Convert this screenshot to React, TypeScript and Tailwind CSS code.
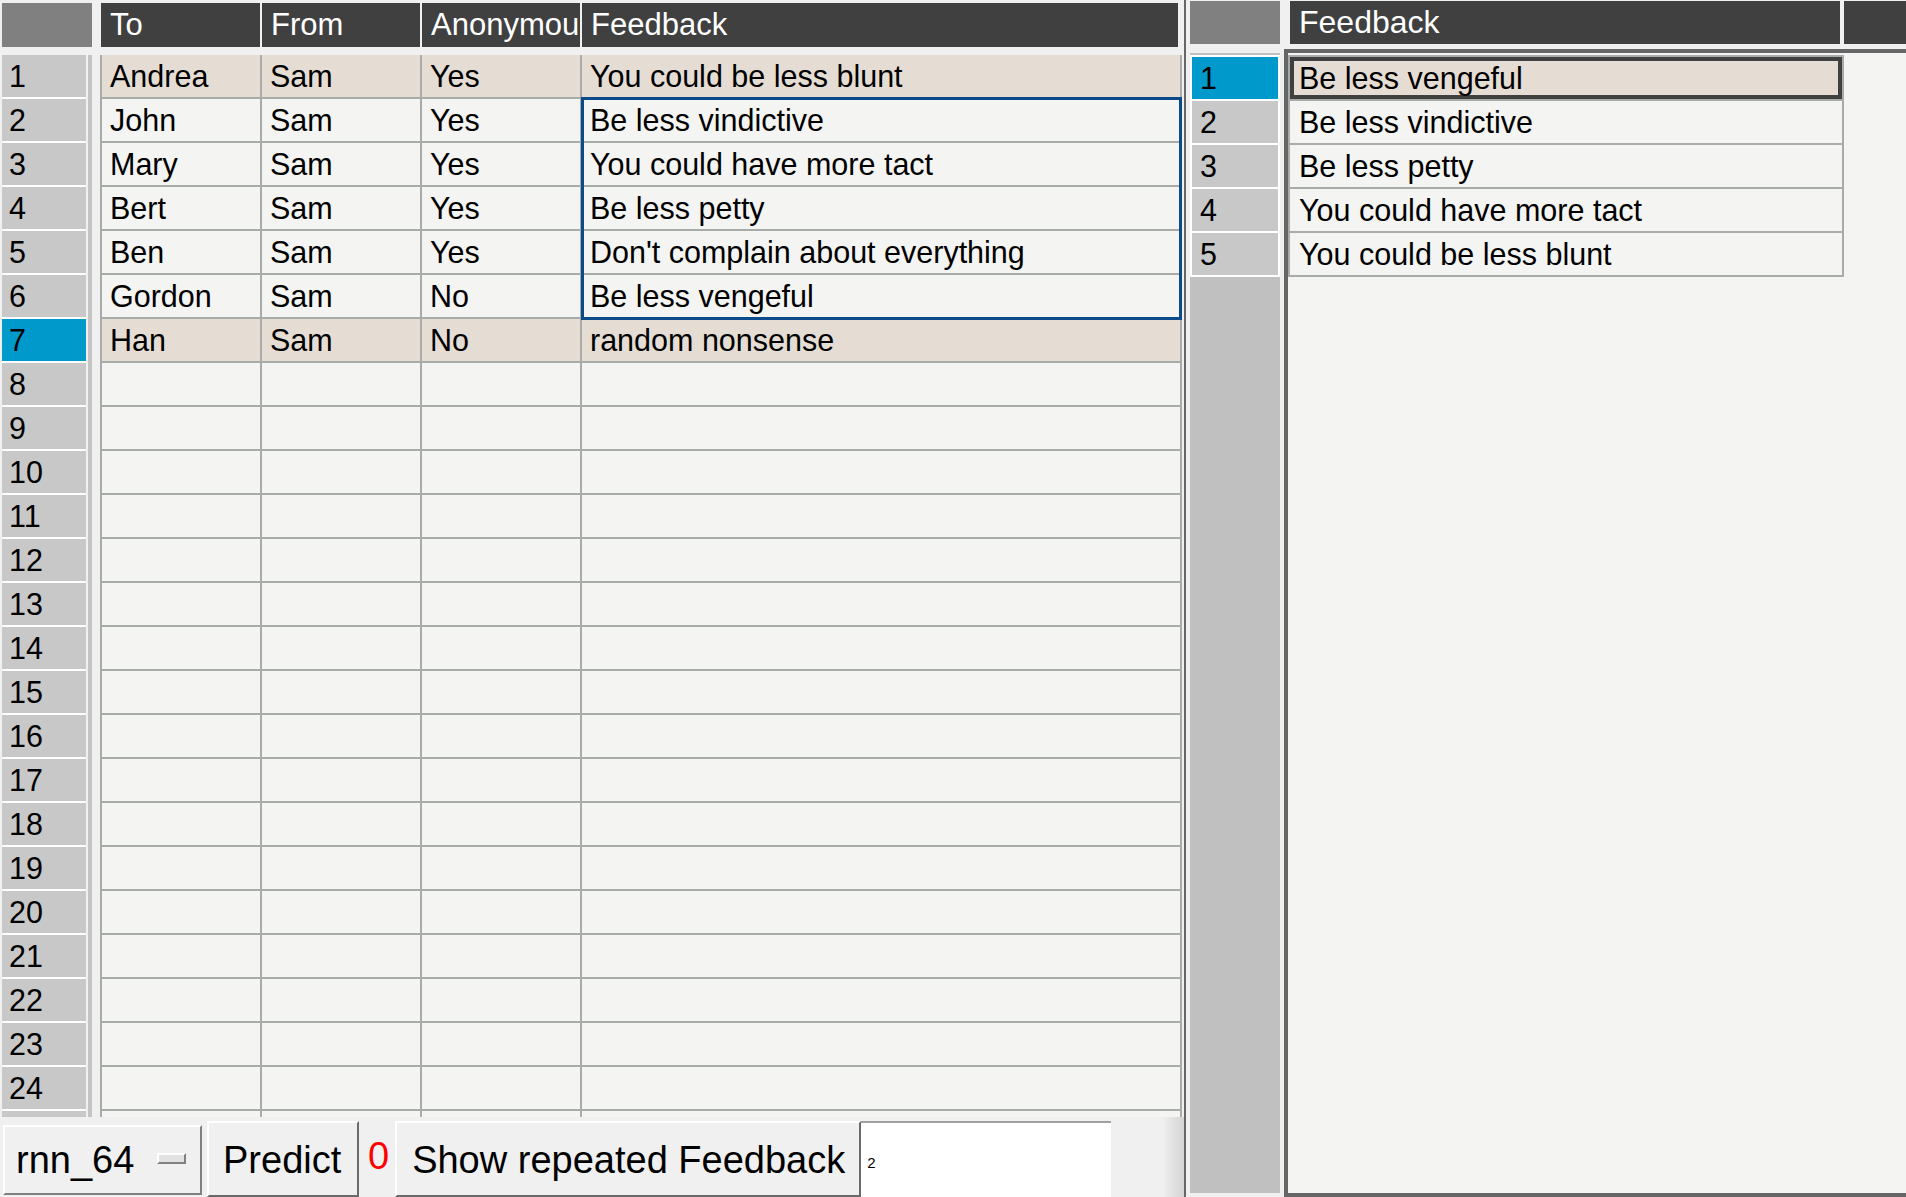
import React from 'react'

const rows = [
  { to: 'Andrea', from: 'Sam', anon: 'Yes', fb: 'You could be less blunt', hl: true },
  { to: 'John', from: 'Sam', anon: 'Yes', fb: 'Be less vindictive', hl: false },
  { to: 'Mary', from: 'Sam', anon: 'Yes', fb: 'You could have more tact', hl: false },
  { to: 'Bert', from: 'Sam', anon: 'Yes', fb: 'Be less petty', hl: false },
  { to: 'Ben', from: 'Sam', anon: 'Yes', fb: "Don't complain about everything", hl: false },
  { to: 'Gordon', from: 'Sam', anon: 'No', fb: 'Be less vengeful', hl: false },
  { to: 'Han', from: 'Sam', anon: 'No', fb: 'random nonsense', hl: true },
]

// 24 full rows plus the top of the 25th, cut off by the toolbar
const allRows = Array.from({ length: 25 }, (_, i) => rows[i] ?? { to: '', from: '', anon: '', fb: '', hl: false })

const headers = [
  { label: 'To', w: 'w-[159px]' },
  { label: 'From', w: 'w-[158px]' },
  { label: 'Anonymou', w: 'w-[158px]' },
  { label: 'Feedback', w: 'w-[596px]' },
]

const repeated = ['Be less vengeful', 'Be less vindictive', 'Be less petty', 'You could have more tact', 'You could be less blunt']

const cell = 'h-[44px] overflow-hidden whitespace-nowrap border-r-2 border-b-2 border-[#a8aca8] pl-[8px] leading-[42px]'

const App = () => {
  return (
    <div className="flex h-[1197px] w-[1906px] overflow-hidden bg-[#f0f0f0] font-['Liberation_Sans',Arial,sans-serif] text-black">
      {/* left: main grid + toolbar */}
      <div className="flex w-[1184px] flex-col">
        <div className="h-[1117px] overflow-hidden">
          <div className="flex pl-[2px] pt-[3px]">
            <div className="h-[44px] w-[90px] bg-[#808080]" />
            <div className="ml-[9px] flex gap-[2px]">
              {headers.map((h) => (
                <div key={h.label} className={`h-[44px] ${h.w} overflow-hidden whitespace-nowrap bg-[#404040] pl-[9px] text-[31px] leading-[44px] text-white`}>
                  {h.label}
                </div>
              ))}
            </div>
          </div>

          <div className="mt-[8px] flex text-[30.5px]">
            <div className="ml-[2px] w-[84px]">
              {allRows.map((_, i) => (
                <div key={i} className={`h-[44px] border-b-2 border-white pl-[7px] leading-[42px] ${i === 6 ? 'bg-[#0099cc]' : 'bg-[#c8c8c8]'}`}>
                  {i < 24 ? i + 1 : ''}
                </div>
              ))}
            </div>
            <div className="ml-[2px] w-[4px] bg-[#c4c4c4]" />
            <div className="relative ml-[8px] w-[1082px] border-l-2 border-[#a8aca8]">
              {allRows.map((r, i) => (
                <div key={i} className={`flex ${r.hl ? 'bg-[#e5ddd3]' : 'bg-[#f4f4f2]'}`}>
                  <div className={`w-[160px] ${cell}`}>{r.to}</div>
                  <div className={`w-[160px] ${cell}`}>{r.from}</div>
                  <div className={`w-[160px] ${cell}`}>{r.anon}</div>
                  <div className={`w-[600px] ${cell}`}>{r.fb}</div>
                </div>
              ))}
              <div className="absolute left-[479px] top-[42px] h-[223px] w-[601px] border-[3px] border-[#0b4a8b]" />
            </div>
          </div>
        </div>

        {/* toolbar */}
        <div className="flex h-[80px] items-start overflow-hidden text-[38px]">
          <div className="ml-[3px] mt-[8px] flex h-[70px] w-[199px] border-2 border-t-white border-l-white border-r-[#808080] border-b-[#808080]">
            <span className="pl-[11px] leading-[66px]">rnn_64</span>
            <div className="ml-auto mr-[14px] mt-[26px] h-[11px] w-[29px] border-2 border-t-white border-l-white border-r-[#808080] border-b-[#808080] bg-[#e2e2e2]" />
          </div>
          <div className="ml-[5px] mt-[4px] h-[76px] w-[152px] border-2 border-t-white border-l-white border-r-[#6a6a6a] border-b-[#6a6a6a] pl-[14px] leading-[74px]">
            Predict
          </div>
          <div className="ml-[9px] leading-[78px] text-[#ff0000]">0</div>
          <div className="ml-[6px] mt-[4px] h-[76px] w-[466px] whitespace-nowrap border-2 border-t-white border-l-white border-r-[#6a6a6a] border-b-[#6a6a6a] pl-[15px] leading-[74px]">
            Show repeated Feedback
          </div>
          <div className="mt-[4px] h-[76px] w-[250px] border-t-2 border-[#a0a0a0] bg-white pl-[6px] pt-[32px] text-[15px] leading-none">
            2
          </div>
          <div className="flex-1" />
          <div className="h-[80px] w-[22px] bg-linear-to-r from-[#f0f0f0] to-[#d4d4d4]" />
        </div>
      </div>

      {/* divider */}
      <div className="w-[2px] bg-[#666666]" />

      {/* right: repeated feedback */}
      <div className="flex flex-1 flex-col pl-[4px]">
        <div className="flex pt-[1px]">
          <div className="h-[43px] w-[90px] bg-[#808080]" />
          <div className="ml-[10px] h-[43px] w-[550px] bg-[#404040] pl-[9px] text-[32px] leading-[42px] text-white">Feedback</div>
          <div className="ml-[4px] h-[43px] flex-1 bg-[#404040]" />
        </div>
        <div className="flex flex-1 text-[30.5px]">
          <div className="mt-[9px] h-[1140px] w-[90px] bg-[#c0c0c0] pt-[2px]">
            {repeated.map((_, i) => (
              <div key={i} className={`h-[44px] border-x-2 border-b-2 border-white pl-[8px] leading-[42px] ${i === 0 ? 'h-[46px] border-t-2 bg-[#0099cc]' : 'bg-[#c8c8c8]'}`}>
                {i + 1}
              </div>
            ))}
          </div>
          <div className="ml-[4px] mt-[5px] h-[1148px] flex-1 border-y-4 border-l-4 border-[#666666] bg-[#f4f4f2]">
            <div className="mt-[2px] w-[556px] border-x-2 border-t-2 border-[#a8aca8]">
              {repeated.map((t, i) => (
                <div
                  key={t}
                  className={`h-[44px] whitespace-nowrap border-b-2 border-[#a8aca8] pl-[9px] leading-[42px] ${i === 0 ? 'bg-[#e5ddd3] shadow-[inset_0_0_0_4px_#404040]' : 'bg-[#f4f4f2]'}`}
                >
                  {t}
                </div>
              ))}
            </div>
          </div>
        </div>
      </div>
    </div>
  )
}

export default App
